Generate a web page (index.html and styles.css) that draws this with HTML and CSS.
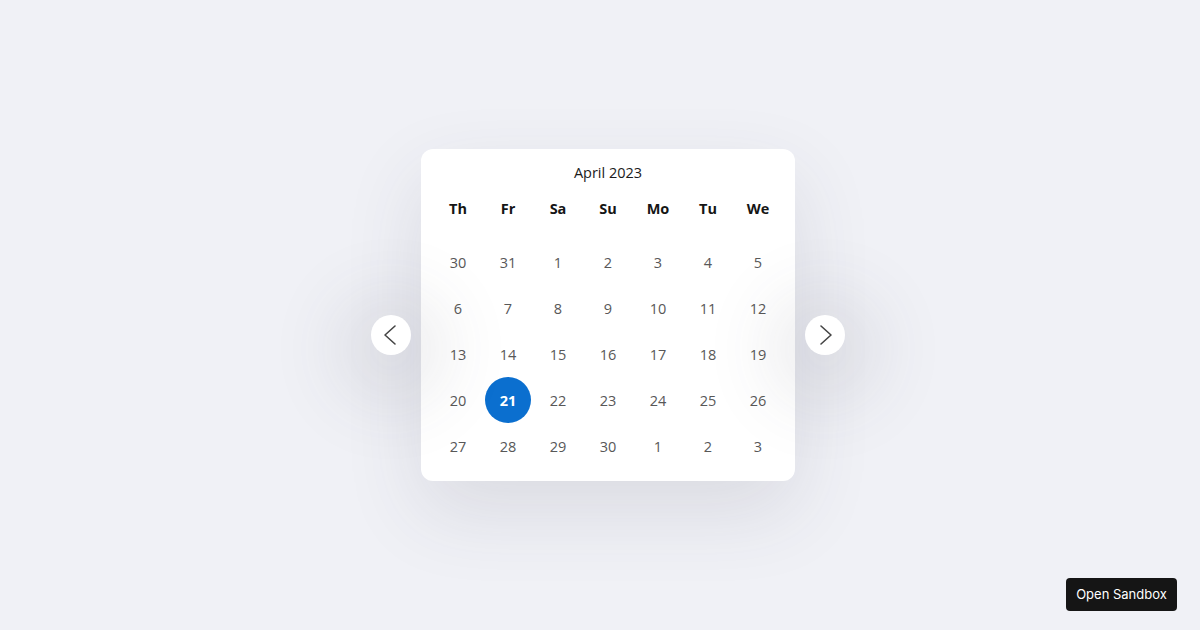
FILE: index.html
```html
<!DOCTYPE html>
<html lang="en">
<head>
<meta charset="utf-8">
<title>Date picker</title>
<link rel="stylesheet" href="styles.css">
</head>
<body>
<main class="stage">
  <div class="picker">
    <button class="nav nav-prev" aria-label="Previous month">
      <svg width="24" height="24" viewBox="0 0 24 24"><path d="M16 3 L6 12 L16 21" fill="none" stroke="#454545" stroke-width="1.6" stroke-linecap="round" stroke-linejoin="round"/></svg>
    </button>
    <section class="calendar">
      <h2 class="month">April 2023</h2>
      <div class="weekdays">
        <span>Th</span><span>Fr</span><span>Sa</span><span>Su</span><span>Mo</span><span>Tu</span><span>We</span>
      </div>
      <div class="days">
        <span>30</span><span>31</span><span>1</span><span>2</span><span>3</span><span>4</span><span>5</span>
        <span>6</span><span>7</span><span>8</span><span>9</span><span>10</span><span>11</span><span>12</span>
        <span>13</span><span>14</span><span>15</span><span>16</span><span>17</span><span>18</span><span>19</span>
        <span>20</span><span class="selected">21</span><span>22</span><span>23</span><span>24</span><span>25</span><span>26</span>
        <span>27</span><span>28</span><span>29</span><span>30</span><span>1</span><span>2</span><span>3</span>
      </div>
    </section>
    <button class="nav nav-next" aria-label="Next month">
      <svg width="24" height="24" viewBox="0 0 24 24"><path d="M8 3 L18 12 L8 21" fill="none" stroke="#454545" stroke-width="1.6" stroke-linecap="round" stroke-linejoin="round"/></svg>
    </button>
  </div>
</main>
<a class="sandbox" href="#">Open Sandbox</a>
</body>
</html>
```

FILE: styles.css
```css
html, body {
  margin: 0;
  height: 100%;
}

body {
  background: #f0f1f6;
  font-family: "Open Sans", "Noto Sans", sans-serif;
  overflow: hidden;
}

.stage {
  height: 630px;
  display: flex;
  justify-content: center;
  align-items: flex-start;
  padding-top: 149px;
  box-sizing: border-box;
}

.picker {
  display: flex;
  align-items: center;
  gap: 10px;
  margin-left: 16px;
}

.calendar {
  width: 374px;
  box-sizing: border-box;
  padding: 12px;
  background: #fff;
  border-radius: 12px;
  box-shadow: 0 30px 80px rgba(60, 60, 80, 0.12);
}

.month {
  margin: 0;
  height: 24px;
  line-height: 24px;
  text-align: center;
  font-size: 14.5px;
  font-weight: 400;
  color: #1b1b1b;
}

.weekdays,
.days {
  display: grid;
  grid-template-columns: repeat(7, 50px);
  grid-auto-rows: 46px;
}

.weekdays {
  margin-bottom: 8px;
}

.weekdays span,
.days span {
  display: flex;
  align-items: center;
  justify-content: center;
}

.weekdays span {
  font-size: 14.5px;
  font-weight: 700;
  color: #151515;
}

.days span {
  font-size: 14.5px;
  color: #585858;
}

.days .selected {
  width: 46px;
  height: 46px;
  justify-self: center;
  border-radius: 50%;
  background: #0b6fcf;
  color: #fff;
  font-weight: 700;
}

.nav {
  position: relative;
  z-index: 1;
  width: 40px;
  height: 40px;
  margin-top: 40px;
  padding: 0;
  border: none;
  border-radius: 50%;
  background: #fff;
  display: flex;
  align-items: center;
  justify-content: center;
  cursor: pointer;
  box-shadow: 0 14px 70px 36px rgba(70, 70, 90, 0.1);
}

.nav svg {
  display: block;
}

.sandbox {
  position: absolute;
  right: 23px;
  bottom: 19px;
  width: 111px;
  height: 33px;
  line-height: 33px;
  text-align: center;
  border-radius: 4px;
  background: #151515;
  color: #fff;
  font-family: "Inter", "Liberation Sans", sans-serif;
  font-size: 13px;
  text-decoration: none;
}
```
